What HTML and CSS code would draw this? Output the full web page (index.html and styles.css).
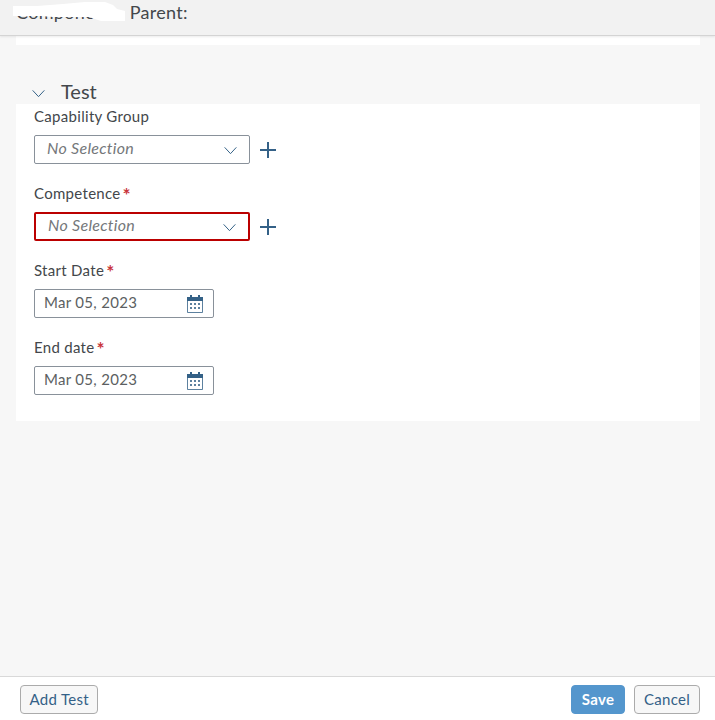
FILE: index.html
```html
<!doctype html>
<html lang="en">
  <head>
    <meta charset="UTF-8" />
    <meta name="viewport" content="width=device-width, initial-scale=1.0" />
    <title>Add Test</title>
    <link rel="stylesheet" href="styles.css">
  </head>
  <body>
    <svg width="0" height="0" class="defs">
      <symbol id="chevron" viewBox="0 0 16 10">
        <path d="M1.5 1.5 8 8.5l6.5-7" fill="none" stroke="currentColor" stroke-width="1.1" />
      </symbol>
      <symbol id="plus" viewBox="0 0 16 16">
        <path d="M8 0v16M0 8h16" fill="none" stroke="currentColor" stroke-width="2" />
      </symbol>
      <symbol id="calendar" viewBox="0 0 16 18">
        <path d="M.5 2.5h15v15H.5z" fill="none" stroke="currentColor" opacity="0.8" />
        <path d="M0 2h16v4H0z" fill="currentColor" />
        <path d="M3 0h2v3H3zM11 0h2v3h-2z" fill="currentColor" />
        <path d="M3 8h2v2H3zM7 8h2v2H7zM11 8h2v2h-2zM3 12h2v2H3zM7 12h2v2H7zM11 12h2v2h-2z" fill="currentColor" opacity="0.8" />
      </symbol>
    </svg>

    <header class="top-bar">
      <span class="top-title">Component Parent:</span>
      <svg class="blot" viewBox="0 0 112 20" width="112" height="20">
        <path d="M0 4 24 4 50 2 72 0 92 0 100 3 104 7 112 9V19L88 19 76 15 50 15 40 15 28 14 0 14z" fill="#fff" />
      </svg>
    </header>

    <main class="content">
      <div class="strip"></div>

      <div class="section-head">
        <svg class="section-chevron"><use href="#chevron" /></svg>
        <span class="section-title">Test</span>
      </div>

      <section class="panel">
        <div class="field">
          <label class="label">Capability Group</label>
          <div class="row">
            <div class="select">
              <span class="placeholder">No Selection</span>
              <svg class="select-chevron"><use href="#chevron" /></svg>
            </div>
            <svg class="add"><use href="#plus" /></svg>
          </div>
        </div>

        <div class="field">
          <label class="label">Competence<span class="req">*</span></label>
          <div class="row">
            <div class="select error">
              <span class="placeholder">No Selection</span>
              <svg class="select-chevron"><use href="#chevron" /></svg>
            </div>
            <svg class="add"><use href="#plus" /></svg>
          </div>
        </div>

        <div class="field">
          <label class="label">Start Date<span class="req">*</span></label>
          <div class="row">
            <div class="date">
              <span class="date-value">Mar 05, 2023</span>
              <svg class="cal"><use href="#calendar" /></svg>
            </div>
          </div>
        </div>

        <div class="field">
          <label class="label">End date<span class="req">*</span></label>
          <div class="row">
            <div class="date">
              <span class="date-value">Mar 05, 2023</span>
              <svg class="cal"><use href="#calendar" /></svg>
            </div>
          </div>
        </div>
      </section>
    </main>

    <footer class="footer">
      <button class="btn">Add Test</button>
      <div class="footer-right">
        <button class="btn primary">Save</button>
        <button class="btn cancel">Cancel</button>
      </div>
    </footer>
  </body>
</html>
```

FILE: styles.css
```css
* {
  box-sizing: border-box;
}
body {
  margin: 0;
  height: 720px;
  overflow: hidden;
  display: flex;
  flex-direction: column;
  font-family: Lato, "Open Sans", Arial, sans-serif;
  font-size: 15px;
  letter-spacing: 0.3px;
  color: #32363a;
  background: #f7f7f7;
}
.defs {
  position: absolute;
}
.top-bar {
  position: relative;
  height: 36px;
  flex: none;
  padding: 2px 0 0 16px;
  font-size: 18px;
  line-height: 20px;
  word-spacing: 13px;
  color: #43474b;
  background: #f2f2f2;
  border-bottom: 1px solid #d4d4d4;
  box-shadow: 0 1px 2px rgba(0, 0, 0, 0.08);
}
.blot {
  position: absolute;
  left: 13px;
  top: 2px;
}
.content {
  flex: 1;
  padding: 0 15px 0 16px;
}
.strip {
  height: 9px;
  background: #fff;
}
.section-head {
  height: 59px;
  padding: 36px 0 0 15px;
  display: flex;
  align-items: flex-start;
}
.section-chevron {
  width: 15px;
  height: 9px;
  margin-top: 8px;
  color: #346187;
}
.section-title {
  margin-left: 15px;
  margin-top: -2px;
  font-size: 20px;
  line-height: 24px;
  letter-spacing: 0;
  color: #43474b;
}
.panel {
  height: 317px;
  padding: 2px 18px 0;
  background: #fff;
}
.field {
  margin-bottom: 19px;
}
.label {
  display: block;
  height: 20px;
  line-height: 20px;
  margin-bottom: 9px;
  color: #43474b;
}
.req {
  margin-left: 2px;
  font-size: 19px;
  line-height: 0;
  vertical-align: -3px;
  color: #c9353b;
  font-weight: 700;
}
.row {
  display: flex;
  align-items: center;
  height: 29px;
}
.select {
  width: 216px;
  height: 29px;
  display: flex;
  align-items: center;
  justify-content: space-between;
  padding: 0 11px 0 12px;
  background: #fff;
  border: 1px solid #89919a;
  border-radius: 2px;
}
.select.error {
  border: 2px solid #b00;
}
.placeholder {
  font-size: 16px;
  font-style: italic;
  color: #74777a;
  margin-top: -5px;
}
.select-chevron {
  width: 15px;
  height: 9px;
  margin-top: 2px;
  color: #346187;
}
.add {
  width: 16px;
  height: 16px;
  margin-left: 10px;
  color: #346187;
}
.date {
  width: 180px;
  height: 29px;
  display: flex;
  align-items: center;
  justify-content: space-between;
  padding: 0 10px 0 9px;
  color: #5c5f62;
  background: #fff;
  border: 1px solid #89919a;
  border-radius: 2px;
}
.date-value {
  margin-top: -3px;
}
.cal {
  width: 16px;
  height: 18px;
  color: #346187;
}
.footer {
  height: 44px;
  flex: none;
  display: flex;
  align-items: center;
  justify-content: space-between;
  padding: 2px 15px 0 20px;
  background: #fff;
  border-top: 1px solid #d9d9d9;
}
.footer-right {
  display: flex;
  gap: 9px;
}
.btn {
  height: 29px;
  padding: 0 8.5px 2px;
  font: inherit;
  letter-spacing: inherit;
  color: #346187;
  background: #f7f7f7;
  border: 1px solid #ababab;
  border-radius: 4px;
}
.btn.cancel {
  width: 66px;
}
.btn.primary {
  width: 54px;
  color: #fff;
  font-weight: 700;
  background: #5496cd;
  border-color: #5496cd;
}
```
